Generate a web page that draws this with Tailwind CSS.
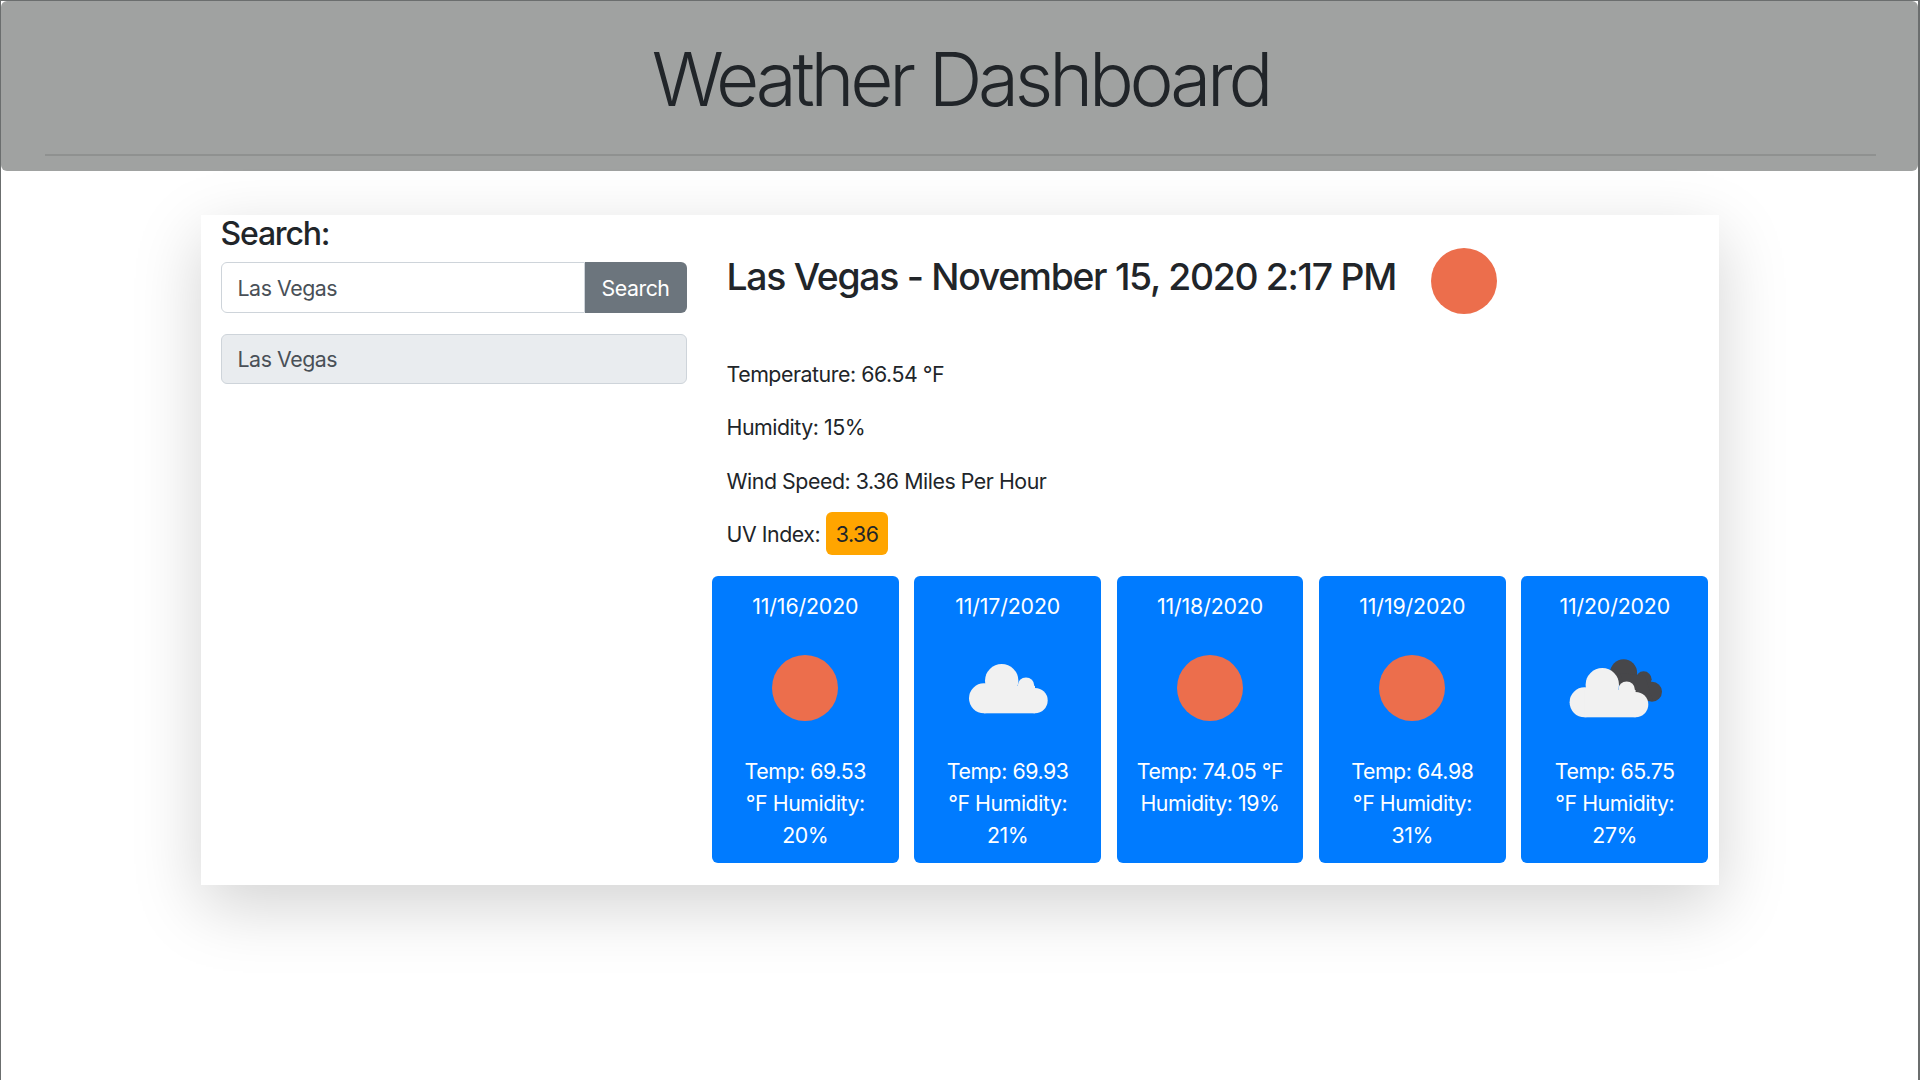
<!DOCTYPE html>
<html lang="en">
<head>
    <meta charset="UTF-8">
    <title>Weather Dashboard</title>
    <script src="https://cdn.jsdelivr.net/npm/@tailwindcss/browser@4"></script>
</head>
<body class="h-screen overflow-hidden bg-white text-[#212529] font-['Inter',sans-serif] text-[21.33px] leading-[32px] tracking-[-0.45px]">
<div class="h-full border-t border-l border-r-2 border-[#6b6e6e]">

    <!-- header -->
    <header class="h-[170px] rounded-md bg-[#a0a2a1] pl-[44px] pr-[42px]">
        <h1 class="h-[153px] pt-[33px] text-center text-[74.6px] leading-[90px] font-light tracking-[-4.2px]">Weather Dashboard</h1>
        <hr class="border-t-2 border-[#8f9190]">
    </header>

    <!-- main panel -->
    <main class="mx-auto mt-[44px] flex h-[670px] w-[1518px] bg-white shadow-[0_21px_64px_rgba(0,0,0,0.175)]">
        <section class="w-[506px] shrink-0 px-5">
            <h2 class="h-[47px] pt-[1px] text-[32px] leading-[36px] font-medium tracking-[-1.2px]">Search:</h2>
            <div class="flex h-[51px]">
                <input type="text" value="Las Vegas" class="w-[364px] rounded-l-md border border-[#ced4da] px-[16px] tracking-[-0.45px] text-[#495057] outline-none">
                <button class="flex-1 rounded-r-md bg-[#6c757d] text-white">Search</button>
            </div>
            <div class="mt-[21px] flex h-[50px] items-center rounded-md border border-[#ced4da] bg-[#e9ecef] px-[16px] text-[#495057]">Las Vegas</div>
        </section>

        <section class="flex-1">
            <div class="flex h-[106px] items-start pl-5 pt-[26px]">
                <h2 class="mt-[13px] text-[37.3px] leading-[45px] font-medium whitespace-nowrap tracking-[-1.28px]">Las Vegas - November 15, 2020 2:17 PM</h2>
                <svg class="ml-[28px] h-20 w-20" viewBox="0 0 80 80"><circle cx="40" cy="40" r="33" fill="#ec6e4c"/></svg>
            </div>
            <div class="mt-[37px] flex flex-col gap-[21.33px] pl-5">
                <p>Temperature: 66.54 °F</p>
                <p>Humidity: 15%</p>
                <p>Wind Speed: 3.36 Miles Per Hour</p>
                <p class="flex h-[32px] items-center">UV Index:<span class="ml-[6px] flex h-[43px] items-center rounded-md bg-[#ffa500] px-[9.5px]">3.36</span></p>
            </div>

            <div class="ml-[5.5px] mt-[26px] grid w-[996px] grid-cols-5 gap-x-[15.75px] text-center text-white">
                <div class="flex h-[287px] flex-col items-center rounded-md bg-[#007bff] pt-[14px]">
                    <div class="tracking-[-0.15px]">11/16/2020</div>
                    <svg class="mt-[26px] h-20 w-20" viewBox="0 0 80 80"><circle cx="40" cy="40" r="33" fill="#ec6e4c"/></svg>
                    <div class="mt-[27px]">Temp: 69.53<br>°F Humidity:<br>20%</div>
                </div>
                <div class="flex h-[287px] flex-col items-center rounded-md bg-[#007bff] pt-[14px]">
                    <div class="tracking-[-0.15px]">11/17/2020</div>
                    <svg class="mt-[26px] h-20 w-20" viewBox="0 0 80 80" fill="#f1f1f1"><circle cx="16" cy="50.3" r="15"/><circle cx="33.7" cy="32.7" r="16.7"/><circle cx="58" cy="37.7" r="8.3"/><circle cx="67" cy="52.6" r="12.7"/><rect x="16" y="38" width="51" height="27.3"/></svg>
                    <div class="mt-[27px]">Temp: 69.93<br>°F Humidity:<br>21%</div>
                </div>
                <div class="flex h-[287px] flex-col items-center rounded-md bg-[#007bff] pt-[14px]">
                    <div class="tracking-[-0.15px]">11/18/2020</div>
                    <svg class="mt-[26px] h-20 w-20" viewBox="0 0 80 80"><circle cx="40" cy="40" r="33" fill="#ec6e4c"/></svg>
                    <div class="mt-[27px]">Temp: 74.05 °F<br>Humidity: 19%</div>
                </div>
                <div class="flex h-[287px] flex-col items-center rounded-md bg-[#007bff] pt-[14px]">
                    <div class="tracking-[-0.15px]">11/19/2020</div>
                    <svg class="mt-[26px] h-20 w-20" viewBox="0 0 80 80"><circle cx="40" cy="40" r="33" fill="#ec6e4c"/></svg>
                    <div class="mt-[27px]">Temp: 64.98<br>°F Humidity:<br>31%</div>
                </div>
                <div class="flex h-[287px] flex-col items-center rounded-md bg-[#007bff] pt-[14px]">
                    <div class="tracking-[-0.15px]">11/20/2020</div>
                    <svg class="mt-[26px] h-20 w-20 overflow-visible" viewBox="0 0 80 80">
                        <g fill="#47474a"><circle cx="48.6" cy="24.7" r="13.5"/><circle cx="68.6" cy="31.3" r="8"/><circle cx="77" cy="43.7" r="10"/><path d="M45 25 L70 28 L78 53 L55 53 Z"/></g>
                        <g fill="#f1f1f1" transform="translate(-6.4 4)"><circle cx="16" cy="50.3" r="15"/><circle cx="33.7" cy="32.7" r="16.7"/><circle cx="58" cy="37.7" r="8.3"/><circle cx="67" cy="52.6" r="12.7"/><rect x="16" y="38" width="51" height="27.3"/></g>
                    </svg>
                    <div class="mt-[27px]">Temp: 65.75<br>°F Humidity:<br>27%</div>
                </div>
            </div>
        </section>
    </main>
</div>
</body>
</html>
